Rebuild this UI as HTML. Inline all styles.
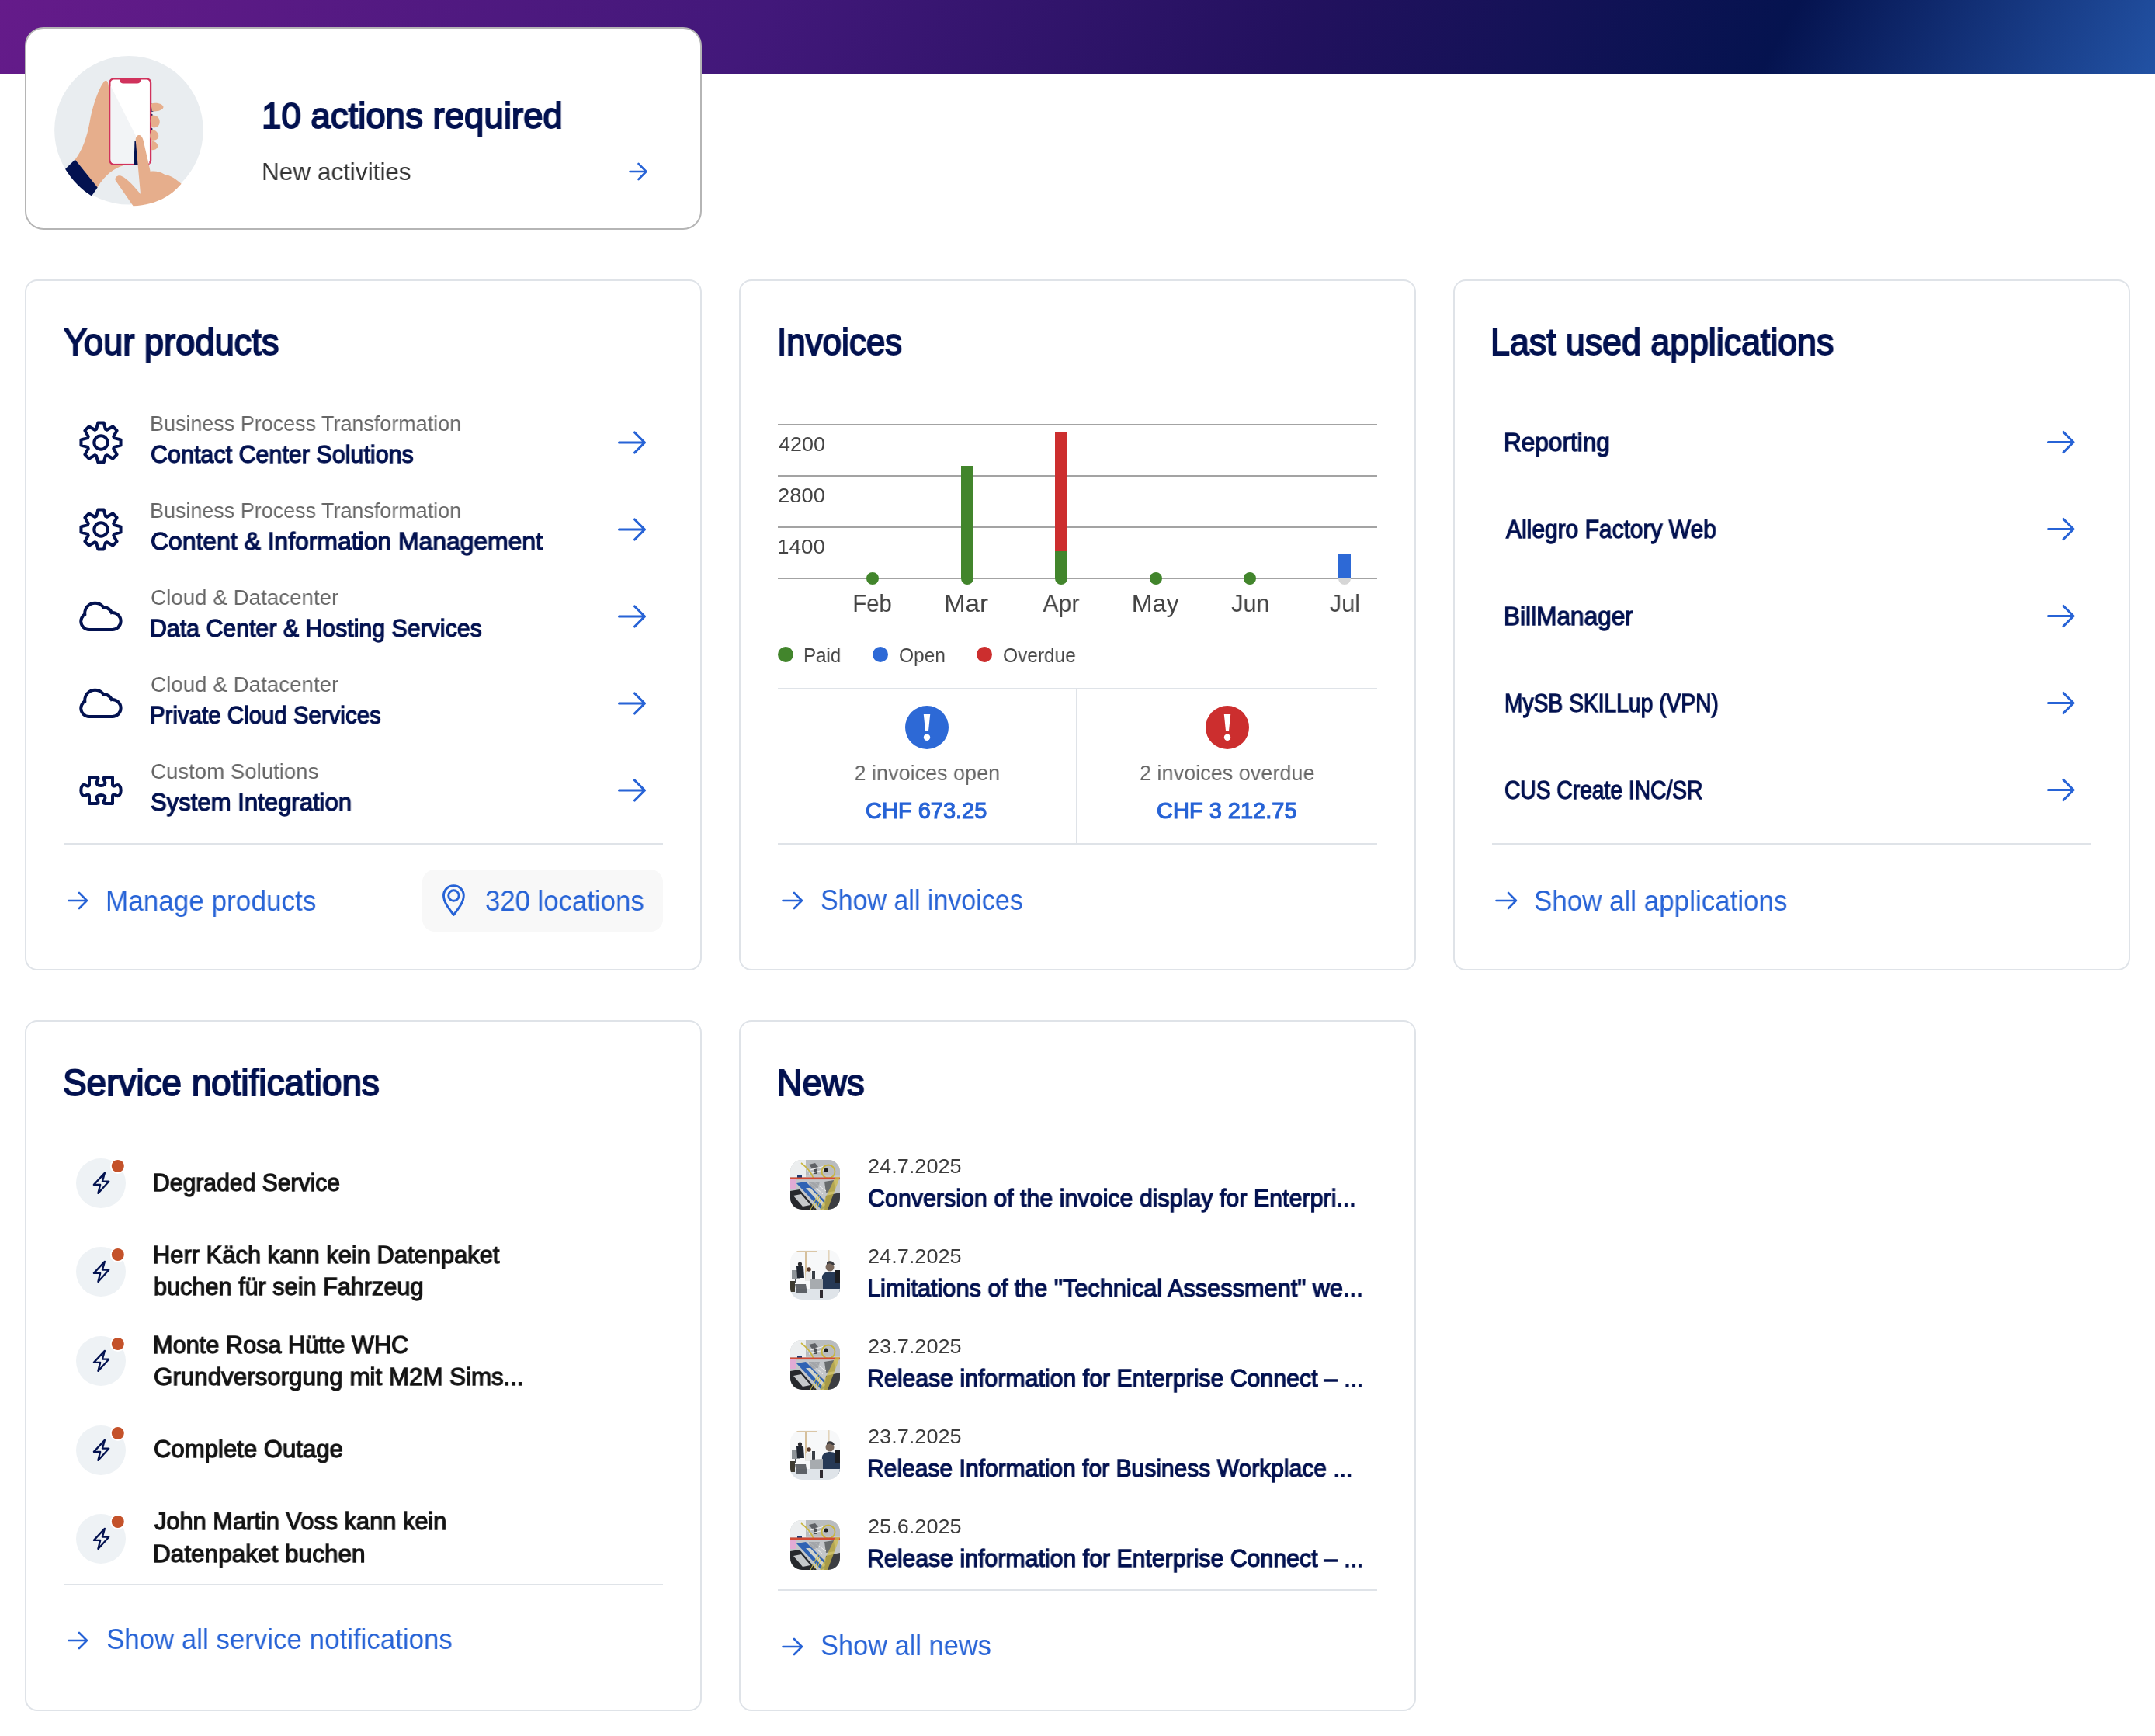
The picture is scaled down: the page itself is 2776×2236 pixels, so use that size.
<!DOCTYPE html>
<html><head><meta charset="utf-8">
<style>
html,body{margin:0;padding:0;background:#fff;}
body{width:2776px;height:2236px;position:relative;overflow:hidden;font-family:"Liberation Sans",sans-serif;}
.hdr{position:absolute;left:0;top:0;width:2776px;height:95px;background:linear-gradient(118deg,#651b8a 0%,#42187a 35%,#22115e 60%,#05134f 82%,#2252a4 100%);}
.card{position:absolute;box-sizing:border-box;background:#fff;border:2px solid #dfe3e8;border-radius:16px;}
.t{position:absolute;white-space:nowrap;}
.t span{display:inline-block;will-change:transform;}
svg.ov{position:absolute;left:0;top:0;}
</style></head><body>
<div class="hdr"></div>
<div class="card" style="left:32px;top:35px;width:872px;height:261px;border-color:#b5b5b5;border-radius:24px"></div>
<div class="card" style="left:32px;top:360px;width:872px;height:890px"></div>
<div class="card" style="left:952px;top:360px;width:872px;height:890px"></div>
<div class="card" style="left:1872px;top:360px;width:872px;height:890px"></div>
<div class="card" style="left:32px;top:1314px;width:872px;height:890px"></div>
<div class="card" style="left:952px;top:1314px;width:872px;height:890px"></div>
<svg class="ov" width="2776" height="2236" viewBox="0 0 2776 2236">
<path d="M811.5,221 H832.5 M822.5,211 L832.5,221 L822.5,231" fill="none" stroke="#2763d6" stroke-width="2.6" stroke-linecap="round" stroke-linejoin="round"/>
<path d="M124.08,553.00 L126.32,544.46 L133.68,544.46 L135.92,553.00 L137.83,553.79 L145.45,549.34 L150.66,554.55 L146.21,562.17 L147.00,564.08 L155.54,566.32 L155.54,573.68 L147.00,575.92 L146.21,577.83 L150.66,585.45 L145.45,590.66 L137.83,586.21 L135.92,587.00 L133.68,595.54 L126.32,595.54 L124.08,587.00 L122.17,586.21 L114.55,590.66 L109.34,585.45 L113.79,577.83 L113.00,575.92 L104.46,573.68 L104.46,566.32 L113.00,564.08 L113.79,562.17 L109.34,554.55 L114.55,549.34 L122.17,553.79 Z" fill="none" stroke="#031250" stroke-width="4" stroke-linejoin="round"/>
<circle cx="130" cy="570" r="8.7" fill="none" stroke="#031250" stroke-width="4"/>
<path d="M797.5,570 H830.5 M817.5,557 L830.5,570 L817.5,583" fill="none" stroke="#2763d6" stroke-width="3.1" stroke-linecap="round" stroke-linejoin="round"/>
<path d="M124.08,665.00 L126.32,656.46 L133.68,656.46 L135.92,665.00 L137.83,665.79 L145.45,661.34 L150.66,666.55 L146.21,674.17 L147.00,676.08 L155.54,678.32 L155.54,685.68 L147.00,687.92 L146.21,689.83 L150.66,697.45 L145.45,702.66 L137.83,698.21 L135.92,699.00 L133.68,707.54 L126.32,707.54 L124.08,699.00 L122.17,698.21 L114.55,702.66 L109.34,697.45 L113.79,689.83 L113.00,687.92 L104.46,685.68 L104.46,678.32 L113.00,676.08 L113.79,674.17 L109.34,666.55 L114.55,661.34 L122.17,665.79 Z" fill="none" stroke="#031250" stroke-width="4" stroke-linejoin="round"/>
<circle cx="130" cy="682" r="8.7" fill="none" stroke="#031250" stroke-width="4"/>
<path d="M797.5,682 H830.5 M817.5,669 L830.5,682 L817.5,695" fill="none" stroke="#2763d6" stroke-width="3.1" stroke-linecap="round" stroke-linejoin="round"/>
<circle cx="115" cy="800.3" r="12.7" fill="#031250"/><circle cx="144.6" cy="800" r="13" fill="#031250"/><circle cx="122.5" cy="790" r="15.3" fill="#031250"/><circle cx="133" cy="794" r="14" fill="#031250"/><rect x="115" y="800" width="29.6" height="13" fill="#031250"/><circle cx="115" cy="800.3" r="8.7" fill="#fff"/><circle cx="144.6" cy="800" r="9" fill="#fff"/><circle cx="122.5" cy="790" r="11.3" fill="#fff"/><circle cx="133" cy="794" r="10" fill="#fff"/><rect x="115" y="800" width="29.6" height="9" fill="#fff"/>
<path d="M797.5,794 H830.5 M817.5,781 L830.5,794 L817.5,807" fill="none" stroke="#2763d6" stroke-width="3.1" stroke-linecap="round" stroke-linejoin="round"/>
<circle cx="115" cy="912.3" r="12.7" fill="#031250"/><circle cx="144.6" cy="912" r="13" fill="#031250"/><circle cx="122.5" cy="902" r="15.3" fill="#031250"/><circle cx="133" cy="906" r="14" fill="#031250"/><rect x="115" y="912" width="29.6" height="13" fill="#031250"/><circle cx="115" cy="912.3" r="8.7" fill="#fff"/><circle cx="144.6" cy="912" r="9" fill="#fff"/><circle cx="122.5" cy="902" r="11.3" fill="#fff"/><circle cx="133" cy="906" r="10" fill="#fff"/><rect x="115" y="912" width="29.6" height="9" fill="#fff"/>
<path d="M797.5,906 H830.5 M817.5,893 L830.5,906 L817.5,919" fill="none" stroke="#2763d6" stroke-width="3.1" stroke-linecap="round" stroke-linejoin="round"/>
<path transform="translate(102,990)" d="M13,11 H22.5 C24.5,11 25,12.5 24,14.5 L23,16.5 C21.5,20 24,22 28,22 C32,22 34.5,20 33,16.5 L32,14.5 C31,12.5 31.5,11 33.5,11 H43 V21 C43,22.5 44.5,23 46,22.2 L48,21.3 C51.5,19.8 53.7,23 53.7,28 C53.7,33 51.5,36.2 48,34.7 L46,33.8 C44.5,33 43,33.5 43,35 V45 H33.5 C31.5,45 31,43.5 32,41.5 L33,39.5 C34.5,36 32,34 28,34 C24,34 21.5,36 23,39.5 L24,41.5 C25,43.5 24.5,45 22.5,45 H13 V35 C13,33.5 11.5,33 10,33.8 L8,34.7 C4.5,36.2 2.3,33 2.3,28 C2.3,23 4.5,19.8 8,21.3 L10,22.2 C11.5,23 13,22.5 13,21 Z" fill="none" stroke="#031250" stroke-width="4" stroke-linejoin="round"/>
<path d="M797.5,1018 H830.5 M817.5,1005 L830.5,1018 L817.5,1031" fill="none" stroke="#2763d6" stroke-width="3.1" stroke-linecap="round" stroke-linejoin="round"/>
<rect x="82" y="1086" width="772" height="2" fill="#dfe3e8"/>
<path d="M88.5,1160 H112 M102,1150 L112,1160 L102,1170" fill="none" stroke="#2763d6" stroke-width="2.6" stroke-linecap="round" stroke-linejoin="round"/>
<rect x="544" y="1120" width="310" height="80" rx="16" fill="#f8f8f8"/>
<path d="M584.4,1178.4 C578,1170 571.5,1162 571.5,1153.5 A12.9,12.9 0 0 1 597.3,1153.5 C597.3,1162 590.8,1170 584.4,1178.4 Z" fill="none" stroke="#2763d6" stroke-width="2.9" stroke-linejoin="round"/>
<circle cx="584.4" cy="1153.5" r="6.7" fill="none" stroke="#2763d6" stroke-width="2.9"/>
<rect x="1002" y="546" width="772" height="2" fill="#a3a3a3"/>
<rect x="1002" y="612" width="772" height="2" fill="#a3a3a3"/>
<rect x="1002" y="678" width="772" height="2" fill="#a3a3a3"/>
<rect x="1002" y="744" width="772" height="2" fill="#a3a3a3"/>
<path d="M1238,600 H1254 V745 A8,8 0 0 1 1238,745 Z" fill="#42852c"/>
<path d="M1359,710 H1375 V745 A8,8 0 0 1 1359,745 Z" fill="#42852c"/>
<rect x="1359" y="557" width="16" height="153" fill="#cc2e2e"/>
<path d="M1724,745 H1740 A8,8 0 0 1 1724,745 Z" fill="#d6d6d6"/>
<rect x="1724" y="714" width="16" height="31" fill="#2d69d6"/>
<circle cx="1124" cy="745" r="8" fill="#42852c"/>
<circle cx="1489" cy="745" r="8" fill="#42852c"/>
<circle cx="1610" cy="745" r="8" fill="#42852c"/>
<circle cx="1012" cy="843" r="10" fill="#42852c"/>
<circle cx="1134" cy="843" r="10" fill="#2d69d6"/>
<circle cx="1268" cy="843" r="10" fill="#cc2e2e"/>
<rect x="1002" y="886" width="772" height="2" fill="#dfe3e8"/>
<rect x="1002" y="1086" width="772" height="2" fill="#dfe3e8"/>
<rect x="1386" y="887" width="2" height="200" fill="#dfe3e8"/>
<circle cx="1194" cy="937" r="28" fill="#2d69d6"/>
<path d="M1189.8,920 H1198.2 L1196,941.5 H1192 Z" fill="#fff"/>
<circle cx="1194" cy="949.7" r="4.2" fill="#fff"/>
<circle cx="1581" cy="937" r="28" fill="#cc2e2e"/>
<path d="M1576.8,920 H1585.2 L1583,941.5 H1579 Z" fill="#fff"/>
<circle cx="1581" cy="949.7" r="4.2" fill="#fff"/>
<path d="M1008.5,1160 H1033 M1023,1150 L1033,1160 L1023,1170" fill="none" stroke="#2763d6" stroke-width="2.6" stroke-linecap="round" stroke-linejoin="round"/>
<path d="M2638.5,569.5 H2671 M2658,556.5 L2671,569.5 L2658,582.5" fill="none" stroke="#2763d6" stroke-width="3.1" stroke-linecap="round" stroke-linejoin="round"/>
<path d="M2638.5,681.5 H2671 M2658,668.5 L2671,681.5 L2658,694.5" fill="none" stroke="#2763d6" stroke-width="3.1" stroke-linecap="round" stroke-linejoin="round"/>
<path d="M2638.5,793.5 H2671 M2658,780.5 L2671,793.5 L2658,806.5" fill="none" stroke="#2763d6" stroke-width="3.1" stroke-linecap="round" stroke-linejoin="round"/>
<path d="M2638.5,905.5 H2671 M2658,892.5 L2671,905.5 L2658,918.5" fill="none" stroke="#2763d6" stroke-width="3.1" stroke-linecap="round" stroke-linejoin="round"/>
<path d="M2638.5,1017.5 H2671 M2658,1004.5 L2671,1017.5 L2658,1030.5" fill="none" stroke="#2763d6" stroke-width="3.1" stroke-linecap="round" stroke-linejoin="round"/>
<rect x="1922" y="1086" width="772" height="2" fill="#dfe3e8"/>
<path d="M1927.5,1160 H1953 M1943,1150 L1953,1160 L1943,1170" fill="none" stroke="#2763d6" stroke-width="2.6" stroke-linecap="round" stroke-linejoin="round"/>
<circle cx="130" cy="1524" r="32" fill="#eef2f5"/>
<path d="M134.9,1510.9 L120.9,1525.9 L129.2,1525.9 L126.4,1536.9 L140.2,1521.7 L131.9,1521.7 Z" fill="none" stroke="#031250" stroke-width="2.3" stroke-linejoin="round"/>
<circle cx="151.8" cy="1502" r="10" fill="#fff"/>
<circle cx="151.8" cy="1502" r="8" fill="#c4522a"/>
<circle cx="130" cy="1638" r="32" fill="#eef2f5"/>
<path d="M134.9,1624.9 L120.9,1639.9 L129.2,1639.9 L126.4,1650.9 L140.2,1635.7 L131.9,1635.7 Z" fill="none" stroke="#031250" stroke-width="2.3" stroke-linejoin="round"/>
<circle cx="151.8" cy="1616" r="10" fill="#fff"/>
<circle cx="151.8" cy="1616" r="8" fill="#c4522a"/>
<circle cx="130" cy="1753" r="32" fill="#eef2f5"/>
<path d="M134.9,1739.9 L120.9,1754.9 L129.2,1754.9 L126.4,1765.9 L140.2,1750.7 L131.9,1750.7 Z" fill="none" stroke="#031250" stroke-width="2.3" stroke-linejoin="round"/>
<circle cx="151.8" cy="1731" r="10" fill="#fff"/>
<circle cx="151.8" cy="1731" r="8" fill="#c4522a"/>
<circle cx="130" cy="1868" r="32" fill="#eef2f5"/>
<path d="M134.9,1854.9 L120.9,1869.9 L129.2,1869.9 L126.4,1880.9 L140.2,1865.7 L131.9,1865.7 Z" fill="none" stroke="#031250" stroke-width="2.3" stroke-linejoin="round"/>
<circle cx="151.8" cy="1846" r="10" fill="#fff"/>
<circle cx="151.8" cy="1846" r="8" fill="#c4522a"/>
<circle cx="130" cy="1982" r="32" fill="#eef2f5"/>
<path d="M134.9,1968.9 L120.9,1983.9 L129.2,1983.9 L126.4,1994.9 L140.2,1979.7 L131.9,1979.7 Z" fill="none" stroke="#031250" stroke-width="2.3" stroke-linejoin="round"/>
<circle cx="151.8" cy="1960" r="10" fill="#fff"/>
<circle cx="151.8" cy="1960" r="8" fill="#c4522a"/>
<rect x="82" y="2040" width="772" height="2" fill="#dfe3e8"/>
<path d="M88.5,2113 H112 M102,2103 L112,2113 L102,2123" fill="none" stroke="#2763d6" stroke-width="2.6" stroke-linecap="round" stroke-linejoin="round"/>
<clipPath id="clip0"><rect x="1018" y="1494" width="64" height="64" rx="15"/></clipPath>
<g clip-path="url(#clip0)"><g transform="translate(1018,1494)"><rect x="0" y="0" width="64" height="64" fill="#c3c6c9"/><rect x="0" y="0" width="20" height="22" fill="#eceeef"/><path d="M20,0 H64 V20 H20 Z" fill="#b9bcbf"/><path d="M24,6 L32,4 L36,9 L28,11 Z" fill="#3a3c40" opacity="0.7"/><rect x="30" y="10" width="4" height="8" fill="#1e2024" opacity="0.7"/><path d="M22,14 L44,8 M24,18 L46,12" stroke="#f2f2f2" stroke-width="1.2"/><path d="M14,4 C22,10 28,18 30,24" fill="none" stroke="#c9b640" stroke-width="1.6"/><circle cx="49" cy="15" r="8.5" fill="none" stroke="#c9b640" stroke-width="1.8"/><circle cx="46" cy="13" r="2.5" fill="#1e1e20"/><rect x="9" y="20" width="6" height="5" fill="#1f3a70"/><rect x="0" y="22.5" width="64" height="2.6" fill="#d24a34"/><rect x="0" y="25" width="8" height="12" fill="#e8a6d6" opacity="0.85"/><path d="M44,28 L56,26 L58,40 L46,42 Z" fill="#2b3030" opacity="0.6"/><path d="M26,30 L42,44 M30,28 L46,40" stroke="#eeeeee" stroke-width="1"/><path d="M24,28 L38,28 L36,36 L26,38 Z" fill="#8c9094" opacity="0.6"/><path d="M0,40 L12,38 L34,64 L0,64 Z" fill="#26282c"/><path d="M4,46 L14,44 L26,58 L16,60 Z" fill="#d7d9dc" opacity="0.9"/><path d="M8,30 L20,28 L50,58 L40,64 Z" fill="#2f63b4"/><path d="M20,36 L26,36 L46,58 L42,60 Z" fill="#e6e0cc" opacity="0.9"/><path d="M46,46 L64,42 L64,64 L44,64 Z" fill="#3c3e42"/><path d="M64,22 L58,22 L38,64 L48,64 Z" fill="#cdbb48" opacity="0.75"/><path d="M26,64 L36,44 M30,64 L38,46 M34,64 L40,48" stroke="#d6c24a" stroke-width="1"/></g></g>
<clipPath id="clip1"><rect x="1018" y="1610" width="64" height="64" rx="15"/></clipPath>
<g clip-path="url(#clip1)"><g transform="translate(1018,1610)"><rect x="0" y="0" width="64" height="64" fill="#f7f8f9"/><rect x="4" y="1" width="30" height="2" fill="#dac6a6"/><rect x="19" y="2" width="2.2" height="38" fill="#d6c09c"/><rect x="49" y="0" width="1.6" height="20" fill="#e2d4bc"/><rect x="2" y="26" width="11" height="11" fill="#8e9499"/><rect x="6" y="37" width="2" height="5" fill="#4a4e52"/><circle cx="12.5" cy="18" r="2.6" fill="#2a2a2e"/><path d="M8,21 L17,21 L18,36 L9,36 Z" fill="#1f2530"/><circle cx="24" cy="25" r="2.8" fill="#5a3c2c"/><path d="M20,29 L27,29 L28,40 L19,40 Z" fill="#e9eaea"/><path d="M28,27 L32,27 L32,40 L28,40 Z" fill="#3a3f46"/><circle cx="51" cy="22" r="5.5" fill="#7b6a5e"/><path d="M47,16 C50,13 56,14 57,19 L54,19 C52,17 49,17 47,19 Z" fill="#3a3a3e"/><path d="M40,54 L41,34 C42,30 46,28 51,28 C57,28 62,31 64,36 L64,56 Z" fill="#263955"/><rect x="58" y="26" width="6" height="16" fill="#1c1e22"/><path d="M26,38 L42,37 L42,52 L26,52 Z" fill="#a7abaf"/><rect x="0" y="50" width="64" height="14" fill="#dfe4e9"/><path d="M6,44 L20,44 L22,56 L8,56 Z" fill="#3c4046" opacity="0.8"/><rect x="0" y="40" width="6" height="14" fill="#3d3a30"/><rect x="38" y="52" width="4" height="10" fill="#2e2a30"/></g></g>
<clipPath id="clip2"><rect x="1018" y="1726" width="64" height="64" rx="15"/></clipPath>
<g clip-path="url(#clip2)"><g transform="translate(1018,1726)"><rect x="0" y="0" width="64" height="64" fill="#c3c6c9"/><rect x="0" y="0" width="20" height="22" fill="#eceeef"/><path d="M20,0 H64 V20 H20 Z" fill="#b9bcbf"/><path d="M24,6 L32,4 L36,9 L28,11 Z" fill="#3a3c40" opacity="0.7"/><rect x="30" y="10" width="4" height="8" fill="#1e2024" opacity="0.7"/><path d="M22,14 L44,8 M24,18 L46,12" stroke="#f2f2f2" stroke-width="1.2"/><path d="M14,4 C22,10 28,18 30,24" fill="none" stroke="#c9b640" stroke-width="1.6"/><circle cx="49" cy="15" r="8.5" fill="none" stroke="#c9b640" stroke-width="1.8"/><circle cx="46" cy="13" r="2.5" fill="#1e1e20"/><rect x="9" y="20" width="6" height="5" fill="#1f3a70"/><rect x="0" y="22.5" width="64" height="2.6" fill="#d24a34"/><rect x="0" y="25" width="8" height="12" fill="#e8a6d6" opacity="0.85"/><path d="M44,28 L56,26 L58,40 L46,42 Z" fill="#2b3030" opacity="0.6"/><path d="M26,30 L42,44 M30,28 L46,40" stroke="#eeeeee" stroke-width="1"/><path d="M24,28 L38,28 L36,36 L26,38 Z" fill="#8c9094" opacity="0.6"/><path d="M0,40 L12,38 L34,64 L0,64 Z" fill="#26282c"/><path d="M4,46 L14,44 L26,58 L16,60 Z" fill="#d7d9dc" opacity="0.9"/><path d="M8,30 L20,28 L50,58 L40,64 Z" fill="#2f63b4"/><path d="M20,36 L26,36 L46,58 L42,60 Z" fill="#e6e0cc" opacity="0.9"/><path d="M46,46 L64,42 L64,64 L44,64 Z" fill="#3c3e42"/><path d="M64,22 L58,22 L38,64 L48,64 Z" fill="#cdbb48" opacity="0.75"/><path d="M26,64 L36,44 M30,64 L38,46 M34,64 L40,48" stroke="#d6c24a" stroke-width="1"/></g></g>
<clipPath id="clip3"><rect x="1018" y="1842" width="64" height="64" rx="15"/></clipPath>
<g clip-path="url(#clip3)"><g transform="translate(1018,1842)"><rect x="0" y="0" width="64" height="64" fill="#f7f8f9"/><rect x="4" y="1" width="30" height="2" fill="#dac6a6"/><rect x="19" y="2" width="2.2" height="38" fill="#d6c09c"/><rect x="49" y="0" width="1.6" height="20" fill="#e2d4bc"/><rect x="2" y="26" width="11" height="11" fill="#8e9499"/><rect x="6" y="37" width="2" height="5" fill="#4a4e52"/><circle cx="12.5" cy="18" r="2.6" fill="#2a2a2e"/><path d="M8,21 L17,21 L18,36 L9,36 Z" fill="#1f2530"/><circle cx="24" cy="25" r="2.8" fill="#5a3c2c"/><path d="M20,29 L27,29 L28,40 L19,40 Z" fill="#e9eaea"/><path d="M28,27 L32,27 L32,40 L28,40 Z" fill="#3a3f46"/><circle cx="51" cy="22" r="5.5" fill="#7b6a5e"/><path d="M47,16 C50,13 56,14 57,19 L54,19 C52,17 49,17 47,19 Z" fill="#3a3a3e"/><path d="M40,54 L41,34 C42,30 46,28 51,28 C57,28 62,31 64,36 L64,56 Z" fill="#263955"/><rect x="58" y="26" width="6" height="16" fill="#1c1e22"/><path d="M26,38 L42,37 L42,52 L26,52 Z" fill="#a7abaf"/><rect x="0" y="50" width="64" height="14" fill="#dfe4e9"/><path d="M6,44 L20,44 L22,56 L8,56 Z" fill="#3c4046" opacity="0.8"/><rect x="0" y="40" width="6" height="14" fill="#3d3a30"/><rect x="38" y="52" width="4" height="10" fill="#2e2a30"/></g></g>
<clipPath id="clip4"><rect x="1018" y="1958" width="64" height="64" rx="15"/></clipPath>
<g clip-path="url(#clip4)"><g transform="translate(1018,1958)"><rect x="0" y="0" width="64" height="64" fill="#c3c6c9"/><rect x="0" y="0" width="20" height="22" fill="#eceeef"/><path d="M20,0 H64 V20 H20 Z" fill="#b9bcbf"/><path d="M24,6 L32,4 L36,9 L28,11 Z" fill="#3a3c40" opacity="0.7"/><rect x="30" y="10" width="4" height="8" fill="#1e2024" opacity="0.7"/><path d="M22,14 L44,8 M24,18 L46,12" stroke="#f2f2f2" stroke-width="1.2"/><path d="M14,4 C22,10 28,18 30,24" fill="none" stroke="#c9b640" stroke-width="1.6"/><circle cx="49" cy="15" r="8.5" fill="none" stroke="#c9b640" stroke-width="1.8"/><circle cx="46" cy="13" r="2.5" fill="#1e1e20"/><rect x="9" y="20" width="6" height="5" fill="#1f3a70"/><rect x="0" y="22.5" width="64" height="2.6" fill="#d24a34"/><rect x="0" y="25" width="8" height="12" fill="#e8a6d6" opacity="0.85"/><path d="M44,28 L56,26 L58,40 L46,42 Z" fill="#2b3030" opacity="0.6"/><path d="M26,30 L42,44 M30,28 L46,40" stroke="#eeeeee" stroke-width="1"/><path d="M24,28 L38,28 L36,36 L26,38 Z" fill="#8c9094" opacity="0.6"/><path d="M0,40 L12,38 L34,64 L0,64 Z" fill="#26282c"/><path d="M4,46 L14,44 L26,58 L16,60 Z" fill="#d7d9dc" opacity="0.9"/><path d="M8,30 L20,28 L50,58 L40,64 Z" fill="#2f63b4"/><path d="M20,36 L26,36 L46,58 L42,60 Z" fill="#e6e0cc" opacity="0.9"/><path d="M46,46 L64,42 L64,64 L44,64 Z" fill="#3c3e42"/><path d="M64,22 L58,22 L38,64 L48,64 Z" fill="#cdbb48" opacity="0.75"/><path d="M26,64 L36,44 M30,64 L38,46 M34,64 L40,48" stroke="#d6c24a" stroke-width="1"/></g></g>
<rect x="1002" y="2047" width="772" height="2" fill="#dfe3e8"/>
<path d="M1008.5,2121 H1033 M1023,2111 L1033,2121 L1023,2131" fill="none" stroke="#2763d6" stroke-width="2.6" stroke-linecap="round" stroke-linejoin="round"/>
<g transform="translate(60,60) scale(0.12674)"><circle cx="836" cy="850" r="756" fill="#e9edf0"/><path d="M290,1148 C360,1060 410,930 440,760 C470,600 530,420 590,350 C615,330 630,370 632,420 L640,1180 C700,1200 760,1205 780,1210 C680,1240 600,1300 515,1432 Z" fill="#e6ae8c"/><path d="M190,1245 L290,1148 L518,1432 L458,1518 C360,1460 260,1360 190,1245 Z" fill="#031250"/><path d="M1058,570 L1080,590 L1085,660 L1058,660 Z" fill="#031250"/><path d="M1058,680 L1078,690 L1075,740 L1058,730 Z" fill="#031250"/><path d="M1058,820 L1078,835 L1068,880 L1058,880 Z" fill="#031250"/><rect x="642" y="326" width="416" height="872" rx="42" fill="#ffffff" stroke="#d0325c" stroke-width="18"/><path d="M652,400 L1048,1188 L700,1188 C670,1188 652,1170 652,1140 Z" fill="#f2f4f6"/><path d="M745,330 H955 V345 C955,365 940,375 920,375 H780 C760,375 745,365 745,345 Z" fill="#d0325c"/><path d="M1062,580 C1110,565 1180,580 1188,615 C1180,650 1110,665 1070,655 Z" fill="#e6ae8c"/><path d="M1068,700 C1120,690 1150,730 1150,765 C1148,810 1110,830 1075,820 C1050,790 1050,730 1068,700 Z" fill="#e6ae8c"/><path d="M1075,840 C1110,850 1140,880 1138,910 C1135,945 1100,960 1065,950 C1040,920 1050,870 1075,840 Z" fill="#e6ae8c"/><path d="M1070,960 C1110,960 1132,990 1130,1010 C1128,1040 1100,1055 1065,1050 Z" fill="#e6ae8c"/><path d="M895,960 L925,960 L930,1205 L888,1205 Z" fill="#031250"/><path d="M905,950 C905,915 925,900 940,900 C960,900 975,920 985,960 L1055,1270 C1100,1262 1150,1270 1200,1300 C1260,1310 1320,1350 1370,1395 C1250,1540 1080,1610 880,1620 L700,1360 C690,1330 720,1300 760,1315 C820,1340 900,1430 955,1500 Z" fill="#e6ae8c"/></g>
</svg>
<div class="t" style="left:337.0px;top:125.2px;font-size:47px;line-height:47px;font-weight:400;-webkit-text-stroke:1.88px #031250;color:#031250"><span id="t0" style="transform:scaleX(0.9701);transform-origin:0 50%">10 actions required</span></div>
<div class="t" style="left:337.0px;top:204.9px;font-size:32px;line-height:32px;font-weight:400;color:#333333"><span id="t1" style="transform:scaleX(0.9849);transform-origin:0 50%">New activities</span></div>
<div class="t" style="left:82.0px;top:417.4px;font-size:48px;line-height:48px;font-weight:400;-webkit-text-stroke:1.92px #031250;color:#031250"><span id="t2" style="transform:scaleX(0.9422);transform-origin:0 50%">Your products</span></div>
<div class="t" style="left:193.0px;top:531.9px;font-size:28px;line-height:28px;font-weight:400;color:#666666"><span id="t3" style="transform:scaleX(0.9617);transform-origin:0 50%">Business Process Transformation</span></div>
<div class="t" style="left:194.0px;top:568.9px;font-size:32px;line-height:32px;font-weight:400;-webkit-text-stroke:1.28px #031250;color:#031250"><span id="t4" style="transform:scaleX(0.9523);transform-origin:0 50%">Contact Center Solutions</span></div>
<div class="t" style="left:193.0px;top:643.9px;font-size:28px;line-height:28px;font-weight:400;color:#666666"><span id="t5" style="transform:scaleX(0.9617);transform-origin:0 50%">Business Process Transformation</span></div>
<div class="t" style="left:194.0px;top:680.9px;font-size:32px;line-height:32px;font-weight:400;-webkit-text-stroke:1.28px #031250;color:#031250"><span id="t6" style="transform:scaleX(0.9961);transform-origin:0 50%">Content &amp; Information Management</span></div>
<div class="t" style="left:194.0px;top:755.9px;font-size:28px;line-height:28px;font-weight:400;color:#666666"><span id="t7" style="transform:scaleX(0.9918);transform-origin:0 50%">Cloud &amp; Datacenter</span></div>
<div class="t" style="left:193.0px;top:792.9px;font-size:32px;line-height:32px;font-weight:400;-webkit-text-stroke:1.28px #031250;color:#031250"><span id="t8" style="transform:scaleX(0.9469);transform-origin:0 50%">Data Center &amp; Hosting Services</span></div>
<div class="t" style="left:194.0px;top:867.9px;font-size:28px;line-height:28px;font-weight:400;color:#666666"><span id="t9" style="transform:scaleX(0.9918);transform-origin:0 50%">Cloud &amp; Datacenter</span></div>
<div class="t" style="left:193.0px;top:904.9px;font-size:32px;line-height:32px;font-weight:400;-webkit-text-stroke:1.28px #031250;color:#031250"><span id="t10" style="transform:scaleX(0.9198);transform-origin:0 50%">Private Cloud Services</span></div>
<div class="t" style="left:194.0px;top:979.9px;font-size:28px;line-height:28px;font-weight:400;color:#666666"><span id="t11" style="transform:scaleX(0.9863);transform-origin:0 50%">Custom Solutions</span></div>
<div class="t" style="left:194.0px;top:1016.9px;font-size:32px;line-height:32px;font-weight:400;-webkit-text-stroke:1.28px #031250;color:#031250"><span id="t12" style="transform:scaleX(0.9709);transform-origin:0 50%">System Integration</span></div>
<div class="t" style="left:136.0px;top:1142.5px;font-size:36px;line-height:36px;font-weight:400;color:#2763d6"><span id="t13" style="transform:scaleX(0.9750);transform-origin:0 50%">Manage products</span></div>
<div class="t" style="left:624.5px;top:1142.5px;font-size:36px;line-height:36px;font-weight:400;color:#2763d6"><span id="t14" style="transform:scaleX(0.9647);transform-origin:0 50%">320 locations</span></div>
<div class="t" style="left:1000.5px;top:417.4px;font-size:48px;line-height:48px;font-weight:400;-webkit-text-stroke:1.92px #031250;color:#031250"><span id="t15" style="transform:scaleX(0.9153);transform-origin:0 50%">Invoices</span></div>
<div class="t" style="left:1002.5px;top:558.7px;font-size:26px;line-height:26px;font-weight:400;color:#444444"><span id="t16" style="transform:scaleX(1.0348);transform-origin:0 50%">4200</span></div>
<div class="t" style="left:1001.5px;top:624.7px;font-size:26px;line-height:26px;font-weight:400;color:#444444"><span id="t17" style="transform:scaleX(1.0529);transform-origin:0 50%">2800</span></div>
<div class="t" style="left:1000.5px;top:690.7px;font-size:26px;line-height:26px;font-weight:400;color:#444444"><span id="t18" style="transform:scaleX(1.0717);transform-origin:0 50%">1400</span></div>
<div class="t" style="left:123.5px;width:2000px;text-align:center;top:760.9px;font-size:32px;line-height:32px;font-weight:400;color:#444444"><span id="t19" style="transform:scaleX(0.9132);transform-origin:50% 50%">Feb</span></div>
<div class="t" style="left:245.0px;width:2000px;text-align:center;top:760.9px;font-size:32px;line-height:32px;font-weight:400;color:#444444"><span id="t20" style="transform:scaleX(1.0388);transform-origin:50% 50%">Mar</span></div>
<div class="t" style="left:367.0px;width:2000px;text-align:center;top:760.9px;font-size:32px;line-height:32px;font-weight:400;color:#444444"><span id="t21" style="transform:scaleX(0.9447);transform-origin:50% 50%">Apr</span></div>
<div class="t" style="left:488.5px;width:2000px;text-align:center;top:760.9px;font-size:32px;line-height:32px;font-weight:400;color:#444444"><span id="t22" style="transform:scaleX(1.0097);transform-origin:50% 50%">May</span></div>
<div class="t" style="left:611.0px;width:2000px;text-align:center;top:760.9px;font-size:32px;line-height:32px;font-weight:400;color:#444444"><span id="t23" style="transform:scaleX(0.9565);transform-origin:50% 50%">Jun</span></div>
<div class="t" style="left:732.0px;width:2000px;text-align:center;top:760.9px;font-size:32px;line-height:32px;font-weight:400;color:#444444"><span id="t24" style="transform:scaleX(0.9582);transform-origin:50% 50%">Jul</span></div>
<div class="t" style="left:1035.1px;top:831.0px;font-size:26px;line-height:26px;font-weight:400;color:#444444"><span id="t25" style="transform:scaleX(0.9272);transform-origin:0 50%">Paid</span></div>
<div class="t" style="left:1157.9px;top:831.0px;font-size:26px;line-height:26px;font-weight:400;color:#444444"><span id="t26" style="transform:scaleX(0.9398);transform-origin:0 50%">Open</span></div>
<div class="t" style="left:1292.0px;top:831.0px;font-size:26px;line-height:26px;font-weight:400;color:#444444"><span id="t27" style="transform:scaleX(0.9404);transform-origin:0 50%">Overdue</span></div>
<div class="t" style="left:194.0px;width:2000px;text-align:center;top:982.3px;font-size:28px;line-height:28px;font-weight:400;color:#666666"><span id="t28" style="transform:scaleX(0.9639);transform-origin:50% 50%">2 invoices open</span></div>
<div class="t" style="left:581.0px;width:2000px;text-align:center;top:982.3px;font-size:28px;line-height:28px;font-weight:400;color:#666666"><span id="t29" style="transform:scaleX(0.9658);transform-origin:50% 50%">2 invoices overdue</span></div>
<div class="t" style="left:193.5px;width:2000px;text-align:center;top:1030.1px;font-size:29px;line-height:29px;font-weight:400;-webkit-text-stroke:1.16px #2763d6;color:#2763d6"><span id="t30" style="transform:scaleX(1.0000);transform-origin:50% 50%">CHF 673.25</span></div>
<div class="t" style="left:580.5px;width:2000px;text-align:center;top:1030.1px;font-size:29px;line-height:29px;font-weight:400;-webkit-text-stroke:1.16px #2763d6;color:#2763d6"><span id="t31" style="transform:scaleX(1.0001);transform-origin:50% 50%">CHF 3 212.75</span></div>
<div class="t" style="left:1057.0px;top:1141.9px;font-size:36px;line-height:36px;font-weight:400;color:#2763d6"><span id="t32" style="transform:scaleX(0.9443);transform-origin:0 50%">Show all invoices</span></div>
<div class="t" style="left:1920.2px;top:417.1px;font-size:48px;line-height:48px;font-weight:400;-webkit-text-stroke:1.92px #031250;color:#031250"><span id="t33" style="transform:scaleX(0.9312);transform-origin:0 50%">Last used applications</span></div>
<div class="t" style="left:1936.5px;top:553.1px;font-size:33px;line-height:33px;font-weight:400;-webkit-text-stroke:1.32px #031250;color:#031250"><span id="t34" style="transform:scaleX(0.9552);transform-origin:0 50%">Reporting</span></div>
<div class="t" style="left:1939.5px;top:665.1px;font-size:33px;line-height:33px;font-weight:400;-webkit-text-stroke:1.32px #031250;color:#031250"><span id="t35" style="transform:scaleX(0.9077);transform-origin:0 50%">Allegro Factory Web</span></div>
<div class="t" style="left:1936.5px;top:777.1px;font-size:33px;line-height:33px;font-weight:400;-webkit-text-stroke:1.32px #031250;color:#031250"><span id="t36" style="transform:scaleX(0.9570);transform-origin:0 50%">BillManager</span></div>
<div class="t" style="left:1937.5px;top:889.1px;font-size:33px;line-height:33px;font-weight:400;-webkit-text-stroke:1.32px #031250;color:#031250"><span id="t37" style="transform:scaleX(0.8546);transform-origin:0 50%">MySB SKILLup (VPN)</span></div>
<div class="t" style="left:1937.5px;top:1001.1px;font-size:33px;line-height:33px;font-weight:400;-webkit-text-stroke:1.32px #031250;color:#031250"><span id="t38" style="transform:scaleX(0.8545);transform-origin:0 50%">CUS Create INC/SR</span></div>
<div class="t" style="left:1975.9px;top:1142.5px;font-size:36px;line-height:36px;font-weight:400;color:#2763d6"><span id="t39" style="transform:scaleX(0.9706);transform-origin:0 50%">Show all applications</span></div>
<div class="t" style="left:81.0px;top:1371.4px;font-size:48px;line-height:48px;font-weight:400;-webkit-text-stroke:1.92px #031250;color:#031250"><span id="t40" style="transform:scaleX(0.9556);transform-origin:0 50%">Service notifications</span></div>
<div class="t" style="left:197.0px;top:1506.9px;font-size:32px;line-height:32px;font-weight:400;-webkit-text-stroke:1.28px #141414;color:#141414"><span id="t41" style="transform:scaleX(0.9411);transform-origin:0 50%">Degraded Service</span></div>
<div class="t" style="left:197.0px;top:1600.4px;font-size:32px;line-height:32px;font-weight:400;-webkit-text-stroke:1.28px #141414;color:#141414"><span id="t42" style="transform:scaleX(0.9654);transform-origin:0 50%">Herr Käch kann kein Datenpaket</span></div>
<div class="t" style="left:198.0px;top:1640.9px;font-size:32px;line-height:32px;font-weight:400;-webkit-text-stroke:1.28px #141414;color:#141414"><span id="t43" style="transform:scaleX(0.9576);transform-origin:0 50%">buchen für sein Fahrzeug</span></div>
<div class="t" style="left:197.0px;top:1715.6px;font-size:32px;line-height:32px;font-weight:400;-webkit-text-stroke:1.28px #141414;color:#141414"><span id="t44" style="transform:scaleX(0.9592);transform-origin:0 50%">Monte Rosa Hütte WHC</span></div>
<div class="t" style="left:198.0px;top:1757.4px;font-size:32px;line-height:32px;font-weight:400;-webkit-text-stroke:1.28px #141414;color:#141414"><span id="t45" style="transform:scaleX(0.9785);transform-origin:0 50%">Grundversorgung mit M2M Sims...</span></div>
<div class="t" style="left:198.0px;top:1849.9px;font-size:32px;line-height:32px;font-weight:400;-webkit-text-stroke:1.28px #141414;color:#141414"><span id="t46" style="transform:scaleX(0.9722);transform-origin:0 50%">Complete Outage</span></div>
<div class="t" style="left:199.0px;top:1942.9px;font-size:32px;line-height:32px;font-weight:400;-webkit-text-stroke:1.28px #141414;color:#141414"><span id="t47" style="transform:scaleX(0.9616);transform-origin:0 50%">John Martin Voss kann kein</span></div>
<div class="t" style="left:197.0px;top:1985.4px;font-size:32px;line-height:32px;font-weight:400;-webkit-text-stroke:1.28px #141414;color:#141414"><span id="t48" style="transform:scaleX(0.9854);transform-origin:0 50%">Datenpaket buchen</span></div>
<div class="t" style="left:137.0px;top:2094.3px;font-size:36px;line-height:36px;font-weight:400;color:#2763d6"><span id="t49" style="transform:scaleX(0.9685);transform-origin:0 50%">Show all service notifications</span></div>
<div class="t" style="left:1000.5px;top:1371.4px;font-size:48px;line-height:48px;font-weight:400;-webkit-text-stroke:1.92px #031250;color:#031250"><span id="t50" style="transform:scaleX(0.9384);transform-origin:0 50%">News</span></div>
<div class="t" style="left:1118.0px;top:1489.4px;font-size:26px;line-height:26px;font-weight:400;color:#3d3d3d"><span id="t51" style="transform:scaleX(1.0434);transform-origin:0 50%">24.7.2025</span></div>
<div class="t" style="left:1118.0px;top:1526.9px;font-size:32px;line-height:32px;font-weight:400;-webkit-text-stroke:1.28px #031250;color:#031250"><span id="t52" style="transform:scaleX(0.9502);transform-origin:0 50%">Conversion of the invoice display for Enterpri...</span></div>
<div class="t" style="left:1118.0px;top:1605.4px;font-size:26px;line-height:26px;font-weight:400;color:#3d3d3d"><span id="t53" style="transform:scaleX(1.0434);transform-origin:0 50%">24.7.2025</span></div>
<div class="t" style="left:1117.0px;top:1642.9px;font-size:32px;line-height:32px;font-weight:400;-webkit-text-stroke:1.28px #031250;color:#031250"><span id="t54" style="transform:scaleX(0.9608);transform-origin:0 50%">Limitations of the &quot;Technical Assessment&quot; we...</span></div>
<div class="t" style="left:1118.0px;top:1721.4px;font-size:26px;line-height:26px;font-weight:400;color:#3d3d3d"><span id="t55" style="transform:scaleX(1.0434);transform-origin:0 50%">23.7.2025</span></div>
<div class="t" style="left:1117.0px;top:1758.9px;font-size:32px;line-height:32px;font-weight:400;-webkit-text-stroke:1.28px #031250;color:#031250"><span id="t56" style="transform:scaleX(0.9460);transform-origin:0 50%">Release information for Enterprise Connect – ...</span></div>
<div class="t" style="left:1118.0px;top:1837.4px;font-size:26px;line-height:26px;font-weight:400;color:#3d3d3d"><span id="t57" style="transform:scaleX(1.0434);transform-origin:0 50%">23.7.2025</span></div>
<div class="t" style="left:1117.0px;top:1874.9px;font-size:32px;line-height:32px;font-weight:400;-webkit-text-stroke:1.28px #031250;color:#031250"><span id="t58" style="transform:scaleX(0.9385);transform-origin:0 50%">Release Information for Business Workplace ...</span></div>
<div class="t" style="left:1118.0px;top:1953.4px;font-size:26px;line-height:26px;font-weight:400;color:#3d3d3d"><span id="t59" style="transform:scaleX(1.0434);transform-origin:0 50%">25.6.2025</span></div>
<div class="t" style="left:1117.0px;top:1990.9px;font-size:32px;line-height:32px;font-weight:400;-webkit-text-stroke:1.28px #031250;color:#031250"><span id="t60" style="transform:scaleX(0.9460);transform-origin:0 50%">Release information for Enterprise Connect – ...</span></div>
<div class="t" style="left:1057.0px;top:2101.8px;font-size:36px;line-height:36px;font-weight:400;color:#2763d6"><span id="t61" style="transform:scaleX(0.9558);transform-origin:0 50%">Show all news</span></div>
</body></html>
